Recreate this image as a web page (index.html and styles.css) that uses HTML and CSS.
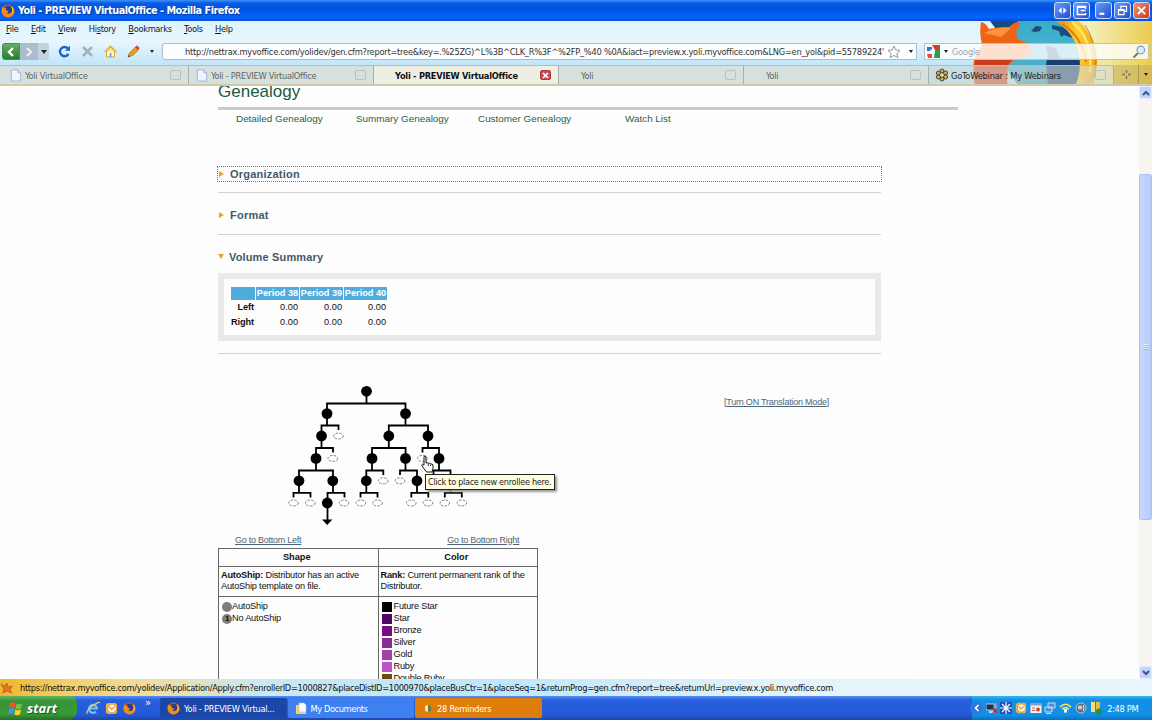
FILE: index.html
```html
<!DOCTYPE html>
<html lang="en">
<head>
    <meta charset="UTF-8">
    <title>Yoli - PREVIEW VirtualOffice</title>
    <link rel="stylesheet" href="styles.css">
</head>
<body>
    <svg class="defs" width="0" height="0">
        <defs>
            <symbol id="firefox" viewBox="0 0 14 14">
                <circle cx="7" cy="7" r="6.5" fill="#d9530e"/>
                <circle cx="7.2" cy="6" r="4.2" fill="#27408b"/>
                <path d="M1 3 Q3 4 5 4 Q4 6 7 7 Q8 9 5 9 Q8 11 11 8 Q12 5 10 2 Q14 5 13.3 9 Q11 14 6 13.3 Q1 12 .6 7Z" fill="#f58a1f"/>
                <path d="M11 3 Q13 6 11.5 9" stroke="#ffd24a" fill="none"/>
            </symbol>
            <symbol id="page" viewBox="0 0 12 14">
                <path d="M1 1h7l3 3v9H1z" fill="#eef5ff" stroke="#9db7de"/>
                <path d="M8 1v3h3" fill="#c7d9f5" stroke="#9db7de"/>
            </symbol>
            <symbol id="outlook" viewBox="0 0 14 14">
                <rect x="1" y="1" width="12" height="12" rx="3" fill="#f3b24a"/>
                <circle cx="7.5" cy="7" r="4.8" fill="#fff7e2" stroke="#d98d1c"/>
                <path d="M4.5 5l2.5 3 3.5-3" fill="none" stroke="#e8912a" stroke-width="1.3"/>
            </symbol>
            <g id="node"><circle r="5.4"/></g>
            <g id="empty"><ellipse rx="4.8" ry="3" fill="#fff" stroke="#777" stroke-width=".9" stroke-dasharray="2.6 1.2"/></g>
        </defs>
    </svg>

    <header class="titlebar">
        <svg width="14" height="14"><use href="#firefox"/></svg>
        <h1>Yoli - PREVIEW VirtualOffice - Mozilla Firefox</h1>
        <div class="window-buttons">
            <span><svg viewBox="0 0 16 16"><path d="M7 4v8L3 8zM9 4v8l4-4z" fill="#fff"/></svg></span>
            <span><svg viewBox="0 0 16 16"><path d="M13 6V3H3v10h10v-2M3 4h10M7 8h6" fill="none" stroke="#fff" stroke-width="1.8"/></svg></span>
            <span class="gap"><svg viewBox="0 0 16 16"><path d="M3 12h6" stroke="#fff" stroke-width="2.6"/></svg></span>
            <span><svg viewBox="0 0 16 16"><path d="M6 6V3h7v6h-3M3 7h7v6H3zM3 8h7" fill="none" stroke="#fff" stroke-width="1.4"/></svg></span>
            <span class="close"><svg viewBox="0 0 16 16"><path d="M3.5 3.5l9 9M12.5 3.5l-9 9" stroke="#fff" stroke-width="2.3"/></svg></span>
        </div>
    </header>

    <div class="chrome">
        <svg class="persona" width="192" height="65" viewBox="960 21 192 65">
            <defs>
                <linearGradient id="globe" x1="0" y1="0" x2="0" y2="1">
                    <stop offset="0" stop-color="#2aa9c4"/><stop offset=".6" stop-color="#4fb4d0"/><stop offset="1" stop-color="#2a86ad"/>
                </linearGradient>
                <linearGradient id="tail" x1="0" y1="0" x2="1" y2="0">
                    <stop offset="0" stop-color="#e58a05"/><stop offset=".55" stop-color="#ffcf30"/><stop offset="1" stop-color="#f19a10"/>
                </linearGradient>
            </defs>
            <ellipse cx="1045" cy="49" rx="42" ry="46" fill="url(#globe)"/>
            <path d="M990 21h28l-4 6-18 2z" fill="#174a7d"/>
            <path d="M1031 31l5-5 6 1-2 4-5 1zM1052 25l10 2 8 5 2 6-8-3-3 2-2-6-7-2z" fill="#1c4b80"/>
            <path d="M1046 46l10 2 4 10h22v28h-34l-2-22 2-8z" fill="#183f70"/>
            <path d="M981 22q4 0 8 7 8-2 20-2 5-5 10-5l1 3q-6 7-2 14l11 5 3 10-16 6q-10 2-8 14l-2 12h-31q-3-14-1-26l8-16q-3-10-1-22z" fill="#ee6417"/>
            <path d="M975 60h37q-8 8-4 26h-33q-1-14 0-26z" fill="#cf3c1c"/>
            <path d="M984 33q14-7 27-5l-10 9z" fill="#ff923a"/>
            <path d="M1055 21h24q20 20 18 45-2 14-9 20h-13q7-14 4-32-5-22-24-33z" fill="url(#tail)"/>
            <path d="M1062 24q20 12 24 38" fill="none" stroke="#e87807" stroke-width="2"/>
            <path d="M1072 22q21 16 18 50" fill="none" stroke="#ffe565" stroke-width="2.5"/>
            <path d="M1085 25q17 26 7 61" fill="none" stroke="#a07a28" stroke-width=".8"/>
        </svg>

        <ul class="menu">
            <li><u>F</u>ile</li>
            <li><u>E</u>dit</li>
            <li><u>V</u>iew</li>
            <li>Hi<u>s</u>tory</li>
            <li><u>B</u>ookmarks</li>
            <li><u>T</u>ools</li>
            <li><u>H</u>elp</li>
        </ul>

        <div class="toolbar">
            <div class="history">
                <span class="back"><svg width="12" height="12"><path d="M8 2L4 6l4 4" fill="none" stroke="#fff" stroke-width="2.4"/></svg></span>
                <span class="forward"><svg width="12" height="12"><path d="M4 2l4 4-4 4" fill="none" stroke="#e8eef5" stroke-width="2.4"/></svg></span>
                <span class="arrow"></span>
            </div>
            <div class="tools">
                <svg width="13" height="13" viewBox="0 0 13 13"><path d="M10.5 9A4.6 4.6 0 1 1 10 3.5" fill="none" stroke="#1b62c4" stroke-width="2.4"/><path d="M12 .8v5H7z" fill="#1b62c4"/></svg>
                <svg width="13" height="13" viewBox="0 0 13 13"><path d="M2 2l9 9M11 2l-9 9" stroke="#a3b2be" stroke-width="2.5"/></svg>
                <svg width="13" height="13" viewBox="0 0 13 13"><path d="M2.5 6.5v5.5h8V6.5" fill="#fffbe0" stroke="#d0a436"/><path d="M.7 7L6.5 1.4 12.3 7" fill="#ffe58a" stroke="#dda51f" stroke-width="1.4"/><path d="M5.5 8h2v4h-2z" fill="#7fa5cf"/></svg>
                <svg width="13" height="13" viewBox="0 0 13 13"><path d="M1 12l1.5-4 6-6 3 3-6 5.5z" fill="#f29a1c" stroke="#b06b10" stroke-width=".8"/><path d="M8 2l2-1.5L12.5 3 11 5z" fill="#c6452c"/><path d="M1 12l.7-2 1.2 1.4z" fill="#333"/></svg>
                <span class="arrow small"></span>
            </div>
            <div class="address">
                <span class="url">http://nettrax.myvoffice.com/yolidev/gen.cfm?report=tree&amp;key=.%25ZG)^L%3B^CLK_R%3F^%2FP_%40 %0A&amp;iact=preview.x.yoli.myvoffice.com&amp;LNG=en_yol&amp;pid=55789224'</span>
                <svg width="14" height="14" viewBox="0 0 14 14"><path d="M7 1l1.8 4 4.2.4-3.2 2.9 1 4.4L7 10.4l-3.8 2.3 1-4.4L1 5.4 5.2 5z" fill="#fff" stroke="#8c98a5"/></svg>
                <span class="arrow small"></span>
            </div>
            <div class="search">
                <svg width="13" height="13" viewBox="0 0 13 13"><rect width="13" height="13" fill="#f4f6fb"/><path d="M0 2h5v4H0z" fill="#3b6fd4"/><path d="M5 0h8v5H8z" fill="#dd3b2a"/><path d="M8 5h5v8H7z" fill="#2f9e49"/><path d="M0 9h5v4H1z" fill="#e8502f"/><circle cx="5.5" cy="6.5" r="2.5" fill="#fff"/></svg>
                <span class="arrow small"></span>
                <span class="placeholder">Google</span>
                <svg width="14" height="14" viewBox="0 0 14 14"><path d="M1.5 12.5L6 8" stroke="#8a7767" stroke-width="2.2"/><circle cx="8.8" cy="5" r="3.8" fill="#d8ecfa" stroke="#7c9dbd" stroke-width="1.2"/></svg>
            </div>
        </div>

        <div class="tabs">
            <div class="tab first"><svg width="12" height="13"><use href="#page"/></svg><span>Yoli VirtualOffice</span><i class="tab-close"></i></div>
            <div class="tab"><svg width="12" height="13"><use href="#page"/></svg><span>Yoli - PREVIEW VirtualOffice</span><i class="tab-close"></i></div>
            <div class="tab active"><span>Yoli - PREVIEW VirtualOffice</span><i class="tab-close"><svg width="9" height="9"><path d="M2 2l5 5M7 2L2 7" stroke="#fff" stroke-width="1.7"/></svg></i></div>
            <div class="tab plain"><span>Yoli</span><i class="tab-close"></i></div>
            <div class="tab plain"><span>Yoli</span><i class="tab-close"></i></div>
            <div class="tab webinar">
                <svg width="14" height="14" viewBox="0 0 14 14" fill="#d6b04a" stroke="#44412c"><circle cx="7" cy="3" r="2"/><circle cx="10.6" cy="5" r="2"/><circle cx="10.6" cy="9" r="2"/><circle cx="7" cy="11" r="2"/><circle cx="3.4" cy="9" r="2"/><circle cx="3.4" cy="5" r="2"/></svg>
                <span>GoToWebinar : My Webinars</span><i class="tab-close"></i>
            </div>
            <div class="tab-button"><svg width="9" height="9"><path d="M4.5 0v3M4.5 6v3M0 4.5h3M6 4.5h3" stroke="#81754a" stroke-width="1.5"/></svg></div>
            <div class="tab-button last"><span class="arrow small"></span></div>
        </div>
    </div>

    <div class="viewport">
        <main class="page">
            <h2 class="title">Genealogy</h2>
            <nav class="links">
                <a>Detailed Genealogy</a>
                <a>Summary Genealogy</a>
                <a>Customer Genealogy</a>
                <a>Watch List</a>
            </nav>

            <section class="fold focused"><h3>Organization</h3></section>
            <section class="fold"><h3>Format</h3></section>
            <section class="fold open"><h3>Volume Summary</h3></section>

            <div class="volume">
                <table>
                    <tr><th></th><th>Period 38</th><th>Period 39</th><th>Period 40</th></tr>
                    <tr><td class="side">Left</td><td>0.00</td><td>0.00</td><td>0.00</td></tr>
                    <tr><td class="side">Right</td><td>0.00</td><td>0.00</td><td>0.00</td></tr>
                </table>
            </div>

            <div class="tree-row">
                <div class="tree">
                    <svg width="320" height="150" viewBox="218 380 320 150">
                        <g fill="none" stroke="#000" stroke-width="1.8">
                            <path d="M366.5 391v12.5M327 413v-9.5h78.5v9.5"/>
                            <path d="M327 413v12.5M321.5 436v-10.5h17v4.5M405.5 413v12.5M388.8 436v-10.5h39.2v10.5"/>
                            <path d="M321.5 436v12M316 458v-10h17v4.5M388.8 436v12M372 458v-10h33.6v10M428 436v12M422.5 452.5v-4.5h16.5v10"/>
                            <path d="M316 458v12.5M299 481v-10.5h34v10.5M372 458v12.5M366.3 481v-10.5h17v4.5M405.5 458v12.5M400 475v-4.5h17v10.5M439 458v12.5M433.5 475v-4.5h17v10.5"/>
                            <path d="M299 481v12M293.5 497.5v-4.7h17v4.7M333 481v12M327.5 522v-29.2h17v4.7M366.3 481v12M360.5 497.5v-4.7h17v4.7M417 481v12M411.3 497.5v-4.7h17v4.7M450.5 481v12M444.8 497.5v-4.7h17v4.7"/>
                        </g>
                        <path d="M322 519.5h10.4l-5.2 5.5z"/>
                        <use href="#node" x="366.5" y="391.3"/>
                        <use href="#node" x="327" y="413.6"/><use href="#node" x="405.5" y="413.6"/>
                        <use href="#node" x="321.5" y="436"/><use href="#empty" x="338.5" y="436"/><use href="#node" x="388.8" y="436"/><use href="#node" x="428" y="436"/>
                        <use href="#node" x="316" y="458.4"/><use href="#empty" x="332.8" y="458.4"/><use href="#node" x="372" y="458.4"/><use href="#node" x="405.5" y="458.4"/><use href="#empty" x="422.3" y="458.4"/><use href="#node" x="439" y="458.4"/>
                        <use href="#node" x="299" y="480.8"/><use href="#node" x="332.8" y="480.8"/><use href="#node" x="366.3" y="480.8"/><use href="#empty" x="383.2" y="480.8"/><use href="#empty" x="400" y="480.8"/><use href="#node" x="417" y="480.8"/><use href="#node" x="450.5" y="480.8"/>
                        <use href="#empty" x="293.5" y="503"/><use href="#empty" x="310.3" y="503"/><use href="#node" x="327.3" y="503"/><use href="#empty" x="344" y="503"/><use href="#empty" x="360.8" y="503"/><use href="#empty" x="377.5" y="503"/><use href="#empty" x="411.3" y="503"/><use href="#empty" x="428" y="503"/><use href="#empty" x="444.8" y="503"/><use href="#empty" x="461.8" y="503"/>
                    </svg>
                    <svg class="cursor" width="14" height="18" viewBox="0 0 14 18"><path d="M3 1.5q1-1 2 0V8q1.500-1 2.200.3Q9 7.500 9.600 9q1.700-.5 2.400 1v3.500L11 17H5.500L2.500 13 .6 10q.4-1.500 2.400 0z" fill="#fff" stroke="#111"/><path d="M7.200 8.500V11M9.600 9.500V11" stroke="#111" stroke-width=".9"/></svg>
                    <div class="tooltip">Click to place new enrollee here.</div>
                </div>
                <a class="translate">[<u>Turn ON Translation Mode</u>]</a>
            </div>

            <div class="jump"><a>Go to Bottom Left</a><a>Go to Bottom Right</a></div>

            <table class="legend">
                <tr><th>Shape</th><th>Color</th></tr>
                <tr class="about">
                    <td><b>AutoShip:</b> Distributor has an active<br>AutoShip template on file.</td>
                    <td><b>Rank:</b> Current permanent rank of the<br>Distributor.</td>
                </tr>
                <tr class="keys">
                    <td>
                        <p><i class="dot"></i>AutoShip</p>
                        <p><i class="dot">1</i>No AutoShip</p>
                    </td>
                    <td>
                        <p><i class="swatch future"></i>Future Star</p>
                        <p><i class="swatch star"></i>Star</p>
                        <p><i class="swatch bronze"></i>Bronze</p>
                        <p><i class="swatch silver"></i>Silver</p>
                        <p><i class="swatch gold"></i>Gold</p>
                        <p><i class="swatch ruby"></i>Ruby</p>
                        <p><i class="swatch double"></i>Double Ruby</p>
                    </td>
                </tr>
            </table>
        </main>
        <div class="scrollbar">
            <span class="scroll-button"><svg width="8" height="6"><path d="M1 5l3-3 3 3" fill="none" stroke="#3d5484" stroke-width="2"/></svg></span>
            <span class="thumb"><i></i></span>
            <span class="scroll-button"><svg width="8" height="6"><path d="M1 1l3 3 3-3" fill="none" stroke="#3d5484" stroke-width="2"/></svg></span>
        </div>
    </div>

    <div class="status">
        <svg width="13" height="12" viewBox="0 0 13 12"><path d="M1 2l3 2 3-3 1 4 4-1-2 4 2 3-5-2-4 2 1-4z" fill="#e3732b" stroke="#b9501f" stroke-width=".7"/></svg>
        <span>https://nettrax.myvoffice.com/yolidev/Application/Apply.cfm?enrollerID=1000827&amp;placeDistID=1000970&amp;placeBusCtr=1&amp;placeSeq=1&amp;returnProg=gen.cfm?report=tree&amp;returnUrl=preview.x.yoli.myvoffice.com</span>
    </div>

    <footer class="taskbar">
        <div class="start">
            <svg width="15" height="15" viewBox="0 0 15 15"><path d="M2 2q3-1.5 5.5 0L6.5 7Q4 5.5 1 7z" fill="#f0562a"/><path d="M8.5 2.5Q11 4 14 2.5L13 7.5q-3 1.5-5.5 0z" fill="#7cc242"/><path d="M1 8q3-1.5 5.5 0l-1 5Q3 11.5 0 13z" fill="#4b8df0"/><path d="M7.3 8.5Q10 10 13 8.5l-1 5q-3 1.5-5.5 0z" fill="#ffcb2e"/></svg>
            <span>start</span>
        </div>
        <div class="quick">
            <svg width="14" height="14" viewBox="0 0 14 14"><path d="M3.5 7.5h7.5A4 4 0 1 0 10 10.5" fill="none" stroke="#6fc3f7" stroke-width="2.2"/><path d="M1 13Q0 9 7 4.5T13.5 2" fill="none" stroke="#f6c850" stroke-width="1.2"/></svg>
            <svg width="13" height="13"><use href="#outlook"/></svg>
            <svg width="13" height="13"><use href="#firefox"/></svg>
            <span>»</span>
        </div>
        <div class="task current"><svg width="13" height="13"><use href="#firefox"/></svg><span>Yoli - PREVIEW Virtual...</span></div>
        <div class="task docs"><svg width="12" height="13" viewBox="0 0 12 13"><path d="M1 3h4l1 1h5v8H1z" fill="#f3d36b"/><path d="M4 1h5l2 2v7H4z" fill="#fff" stroke="#a9bddc" stroke-width=".6"/></svg><span>My Documents</span></div>
        <div class="task reminders"><svg width="8" height="9"><path d="M1 2l3-1v7l-3-1z" fill="#f9e7a4"/><path d="M4 1l3 1v5l-3 1z" fill="#5e8250"/></svg><span>28 Reminders</span></div>
        <div class="tray">
            <span class="expand"><svg width="8" height="8"><path d="M5.5 1L2.5 4l3 3" fill="none" stroke="#fff" stroke-width="1.6"/></svg></span>
            <svg width="12" height="12"><path d="M0 2h8v6H0z" fill="#20304f" stroke="#b8c6dd"/><path d="M3 10h6" stroke="#ccd6e8" stroke-width="2"/><path d="M7 6l4 5M11 6l-4 5" stroke="#c3272a" stroke-width="1.5"/><path d="M10 1v6" stroke="#99b" stroke-width="2"/></svg>
            <svg width="12" height="12" stroke="#fff" stroke-width="1.2"><rect width="12" height="12" fill="#1c52b8" stroke="none"/><path d="M6 0v12M0 6h12M2 2l8 8M10 2l-8 8"/></svg>
            <svg width="12" height="12"><use href="#outlook"/></svg>
            <svg width="12" height="12"><path d="M.5 2h11v9H.5z" fill="#f4f2ed"/><path d="M.5 1h11v2.5H.5z" fill="#7d9fd5"/><circle cx="8" cy="7.5" r="2" fill="#d2432e"/><path d="M2 6h3M2 8.5h3" stroke="#c55"/></svg>
            <svg width="12" height="12"><path d="M4 1h7v5H4zM1 5h7v5H1z" fill="#4d8cd8" stroke="#c8dcf4"/><path d="M2 11.5h5" stroke="#c8dcf4"/></svg>
            <svg class="wifi" width="13" height="12" viewBox="0 0 14 12" fill="none" stroke-width="1.7"><path d="M1 5q6-6 12 0" stroke="#f3e259"/><path d="M3.5 7.5q3.5-4 7 0" stroke="#e9f18a"/><path d="M7 7v4" stroke="#fff" stroke-width="3"/></svg>
            <svg width="12" height="12"><circle cx="6" cy="6" r="5" fill="#5c6a7b" stroke="#b9c3cf"/><circle cx="5" cy="5.5" r="2.2" fill="#c4ccd5"/><path d="M8 3q2 3 0 6" stroke="#e6ebf1" fill="none"/></svg>
            <svg class="shield" width="12" height="13"><path d="M1 0h4v10H1z" fill="#f2dc7c"/><path d="M6 0h4v9H6z" fill="#e2bd48"/><circle cx="9" cy="9.5" r="3" fill="#2e8c3c"/></svg>
            <span class="clock">2:48 PM</span>
        </div>
    </footer>
</body>
</html>
```

FILE: styles.css
```css
/* Common styles */
* {
    box-sizing: border-box;
}
body {
    margin: 0;
    width: 1152px;
    height: 720px;
    overflow: hidden;
    display: flex;
    flex-direction: column;
    font-family: "DejaVu Sans Condensed", "DejaVu Sans", sans-serif;
    font-size: 9.2px;
    letter-spacing: -.32px;
    color: #222;
    background-color: #fdfdfd;
}
svg {
    display: block;
    flex-shrink: 0;
}
.defs {
    position: absolute;
}
span {
    white-space: nowrap;
}
.arrow {
    border: 3px solid transparent;
    border-top: 4px solid #222;
    border-bottom: 0;
}
.arrow.small {
    border-width: 2px;
    border-top-width: 3px;
    border-bottom: 0;
}

/* Window title */
.titlebar {
    height: 21px;
    flex-shrink: 0;
    display: flex;
    align-items: center;
    padding: 0 2px 0 1px;
    background: linear-gradient(#3c95fb 0, #0a5be6 3px, #0052dd 9px, #0463fb 17px, #0150d8 21px);
}
.titlebar h1 {
    margin: 0 auto 0 3px;
    color: #fff;
    font-size: 10.8px;
    line-height: 20px;
    letter-spacing: -.48px;
    text-shadow: 1px 1px 1px #0b3a9c;
}
.window-buttons {
    display: flex;
    gap: 2px;
}
.window-buttons span {
    width: 17px;
    height: 17px;
    padding: 1px;
    border: 1px solid #cfdefb;
    border-radius: 3px;
    background: linear-gradient(135deg, #6b9cf8, #1b4fd6);
}
.window-buttons .gap {
    margin-left: 3px;
}
.window-buttons .close {
    background: linear-gradient(135deg, #f09173, #cf3a13);
}

/* Browser chrome */
.chrome {
    position: relative;
    height: 65px;
    flex-shrink: 0;
    display: flex;
    flex-direction: column;
    background: linear-gradient(90deg, transparent 1000px, #f4efba 1090px, #eccb4d 1152px), linear-gradient(#dff3fd, #e9f6fc 20px, #c2e6fa 43px, #b7dff6 46px);
}
.persona {
    position: absolute;
    right: 0;
    top: 0;
}
.menu {
    height: 17px;
    margin: 0;
    padding: 0 0 0 6px;
    list-style: none;
    display: flex;
    gap: 12.4px;
    line-height: 16px;
    color: #151515;
}
.toolbar {
    position: relative;
    height: 27px;
    display: flex;
    align-items: center;
}
.history {
    display: flex;
    align-items: center;
    width: 47px;
    height: 17px;
    margin-left: 2px;
    border-radius: 3px;
    background-color: #c2d3df;
}
.history .back,
.history .forward {
    display: flex;
    align-items: center;
    justify-content: center;
    width: 18px;
    height: 17px;
    background-color: #a9bdcc;
}
.history .back {
    border: 1px solid #4d8b56;
    border-radius: 3px 0 0 3px;
    background: linear-gradient(#66ae66, #237f2c);
}
.history .arrow {
    margin-left: 3px;
}
.tools {
    display: flex;
    align-items: center;
    width: 113px;
    padding-left: 9px;
    gap: 10px;
}
.address {
    display: flex;
    align-items: center;
    width: 755px;
    height: 17px;
    padding-left: 22px;
    border: 1px solid #a9bfcd;
    border-radius: 3px 0 0 3px;
    background-color: #fbfdfe;
}
.url {
    width: 702px;
    color: #333;
    letter-spacing: -.24px;
}
.address .arrow {
    margin-left: 8px;
}
.search {
    display: flex;
    align-items: center;
    gap: 4px;
    width: 225px;
    height: 17px;
    margin-left: 7px;
    padding: 0 2px;
    border: 1px solid #b8c3c4;
    background-color: rgba(255, 255, 255, .8);
}
.placeholder {
    flex-grow: 1;
    color: #a5a5a5;
    letter-spacing: -.2px;
}

/* Tabs */
.tabs {
    position: relative;
    height: 21px;
    display: flex;
    border-bottom: 2px solid #cfcaa9;
}
.tab {
    display: flex;
    align-items: center;
    width: 185px;
    padding: 0 7px;
    border-right: 1px solid #a4b0af;
    border-top: 1px solid #b1bfc2;
    background-color: #d6e0dd;
    color: #5e6666;
    letter-spacing: -.27px;
}
.tab svg {
    margin-right: 3px;
}
.tab.first {
    width: 189px;
    padding-left: 10px;
}
.tab span {
    flex-grow: 1;
}
.tab-close {
    width: 11px;
    height: 10px;
    border: 1px solid #b8c2c2;
    border-radius: 2px;
}
.tab.active {
    background-color: #efeee3;
    color: #111;
    font-weight: bold;
    letter-spacing: -.25px;
    padding-left: 21px;
}
.active .tab-close {
    background-color: #c94d52;
    border-color: #a73d42;
}
.tab.plain {
    padding-left: 22px;
}
.tab.webinar {
    background-color: rgba(214, 220, 211, .6);
    color: #222;
    padding-left: 6px;
    letter-spacing: -.2px;
}
.webinar svg {
    margin-right: 2px;
}
.tab-button {
    flex-grow: 1;
    display: flex;
    align-items: center;
    justify-content: center;
    border-right: 1px solid #a89a55;
    background-color: rgba(190, 170, 90, .5);
}
.tab-button.last {
    flex-grow: 0;
    width: 13px;
    border: 0;
}

/* Page */
.viewport {
    height: 593px;
    flex-shrink: 0;
    display: flex;
    overflow: hidden;
}
.page {
    flex-grow: 1;
    height: 593px;
    overflow: hidden;
    padding-left: 218px;
    font-family: "Liberation Sans", Arial, sans-serif;
    font-size: 9.9px;
    letter-spacing: 0;
}
.title {
    width: 740px;
    height: 24px;
    margin: 0;
    border-bottom: 3px solid #cbcbcb;
    font-size: 17px;
    font-weight: normal;
    line-height: 12px;
    color: #225a3c;
}
.links {
    display: flex;
    height: 57px;
    padding: 3px 0 0 18px;
    line-height: 12px;
    color: #2b6248;
}
.links a {
    width: 120px;
}
.links a:nth-child(2) {
    width: 122px;
}
.links a:nth-child(3) {
    width: 147px;
}
.fold {
    width: 663px;
    height: 41.5px;
    border-bottom: 1px solid #d3d3d3;
    padding-top: 15px;
}
.fold h3 {
    display: flex;
    align-items: center;
    margin: 0;
    font-size: 11px;
    line-height: 14px;
    letter-spacing: .22px;
    color: #43596b;
}
.fold h3::before {
    content: "";
    margin: 0 6px 0 1px;
    border: 3.5px solid transparent;
    border-left: 5px solid #e2a92c;
    border-right: 0;
}
.fold.focused {
    height: 26px;
    padding-top: 0;
}
.fold.focused h3 {
    outline: 1px dotted #777;
}
.fold.open {
    height: 38px;
    border: 0;
}
.fold.open h3 {
    letter-spacing: .15px;
}
.fold.open h3::before {
    margin: 0 5px 0 0;
    border: 3.5px solid transparent;
    border-top: 5px solid #e2a92c;
    border-bottom: 0;
}
.volume {
    width: 663px;
    height: 68px;
    margin-bottom: 12px;
    padding: 6px;
    border: 6px solid #e9e9e9;
}
.volume table {
    border-spacing: 1px;
    margin-top: 1px;
    table-layout: fixed;
    width: 158px;
    font-size: 9.2px;
    color: #111;
}
.volume th {
    height: 13px;
    padding: 0;
    background-color: #50acdd;
    color: #fff;
    white-space: nowrap;
}
.volume th:first-child {
    width: 24px;
}
.volume td {
    padding: 0 1px 0 0;
    height: 13.5px;
    text-align: right;
}
.volume .side {
    font-weight: bold;
    letter-spacing: -.1px;
}
.tree-row {
    display: flex;
    width: 663px;
    height: 181px;
    border-top: 1px solid #d3d3d3;
    padding-top: 26px;
}
.tree {
    position: relative;
    width: 506px;
}
.cursor {
    position: absolute;
    left: 203px;
    top: 75px;
}
.tooltip {
    position: absolute;
    left: 207px;
    top: 94px;
    width: 130px;
    height: 16px;
    padding-left: 2px;
    border: 1px solid #222;
    background-color: #ffffe1;
    box-shadow: 2px 2px 2px #999;
    font-family: "DejaVu Sans Condensed", sans-serif;
    font-size: 9px;
    line-height: 14px;
    letter-spacing: -.27px;
    white-space: nowrap;
}
.translate {
    margin-top: 17px;
    font-size: 9px;
    letter-spacing: -.22px;
    color: #4c657a;
    white-space: nowrap;
}
.jump {
    display: flex;
    gap: 146px;
    height: 14px;
    padding-left: 17px;
    font-size: 9px;
    line-height: 12px;
    letter-spacing: -.25px;
    text-decoration: underline;
    color: #4c657a;
}
.legend {
    width: 320px;
    height: 200px;
    border-collapse: collapse;
    table-layout: fixed;
    font-size: 9.2px;
    line-height: 11.5px;
    letter-spacing: -.2px;
    color: #111;
}
.legend th,
.legend td {
    border: 1px solid #666;
    padding: 0 2px;
}
.legend th {
    height: 18px;
    padding: 2px 5px 0 2px;
    letter-spacing: 0;
}
.legend .about td {
    height: 30px;
}
.legend .keys td {
    vertical-align: top;
    padding: 4px 3px;
}
.legend p {
    display: flex;
    align-items: center;
    height: 12px;
    margin: 0;
}
.dot {
    width: 10px;
    height: 10px;
    border-radius: 5px;
    background-color: #7d7d7d;
    font-size: 8px;
    font-weight: bold;
    font-style: normal;
    line-height: 10px;
    text-align: center;
}
.swatch {
    width: 10px;
    height: 10px;
    margin-right: 2px;
}
.future { background-color: #000; }
.star { background-color: #4f0664; }
.bronze { background-color: #760b88; }
.silver { background-color: #8b2b96; }
.gold { background-color: #a13fab; }
.ruby { background-color: #bb54c6; }
.double { background-color: #6b4d0c; }

/* Scrollbar */
.scrollbar {
    width: 13px;
    height: 593px;
    display: flex;
    flex-direction: column;
    background-color: #f6f5ef;
}
.scroll-button {
    display: flex;
    align-items: center;
    justify-content: center;
    height: 13px;
    background-color: #c3d4fc;
    border: 1px solid #e6edfd;
    border-radius: 2px;
}
.thumb {
    display: flex;
    align-items: center;
    justify-content: center;
    height: 346px;
    margin: 75px 0 146px;
    border: 1px solid #a9c0f3;
    border-radius: 2px;
    background: linear-gradient(90deg, #c8d7fd, #b9cbf9);
}
.thumb i {
    width: 5px;
    height: 6px;
    background: repeating-linear-gradient(#eef3fe 0, #eef3fe 1px, #9ab2e8 1px, #9ab2e8 2px);
}

/* Status */
.status {
    height: 17px;
    flex-shrink: 0;
    display: flex;
    align-items: center;
    gap: 7px;
    color: #111;
    letter-spacing: -.31px;
    background: linear-gradient(90deg, #edb62d 0, #f2ce67 60px, #f0dda0 150px, #c9e8f2 260px, #bfe6fb 500px, #e4f4fa 800px, #e8f5fa 1152px);
}

/* Taskbar */
.taskbar {
    height: 24px;
    flex-shrink: 0;
    display: flex;
    background: linear-gradient(#5a90f3, #285fdf 4px, #2459d8 19px, #1c46a8);
    color: #fff;
}
.start {
    display: flex;
    align-items: center;
    gap: 4px;
    width: 77px;
    padding-left: 8px;
    border-radius: 0 7px 9px 0;
    background: linear-gradient(#63b562, #389438 5px, #379b38 18px, #276f29);
    font-family: "Open Sans", sans-serif;
    font-size: 13px;
    font-style: italic;
    font-weight: bold;
    letter-spacing: 0;
    text-shadow: 1px 1px 1px #1c4f1e;
}
.quick {
    display: flex;
    align-items: center;
    gap: 5px;
    width: 83px;
    padding-left: 9px;
}
.quick span {
    align-self: flex-start;
    margin-left: 4px;
    font-size: 11px;
}
.task {
    display: flex;
    align-items: center;
    gap: 4px;
    width: 126.5px;
    height: 20px;
    margin-top: 2px;
    margin-right: 1px;
    padding-left: 7px;
    border-radius: 2px;
    background-color: #3e80ef;
    letter-spacing: -.25px;
}
.task.current {
    background-color: #1b48a8;
}
.task.docs {
    letter-spacing: -.4px;
}
.task.reminders {
    background-color: #df7d0b;
    padding-left: 9px;
    gap: 5px;
}
.tray {
    display: flex;
    align-items: center;
    gap: 2.7px;
    width: 180px;
    margin-left: auto;
    background: linear-gradient(#3cb3f3, #1290e4 4px, #1090e6 19px, #0c6fc0);
}
.expand {
    display: flex;
    align-items: center;
    justify-content: center;
    width: 13px;
    height: 12px;
    margin-left: -2px;
    border-radius: 6px;
    background-color: #2d78dd;
}
.clock {
    margin-left: 3px;
}
```
